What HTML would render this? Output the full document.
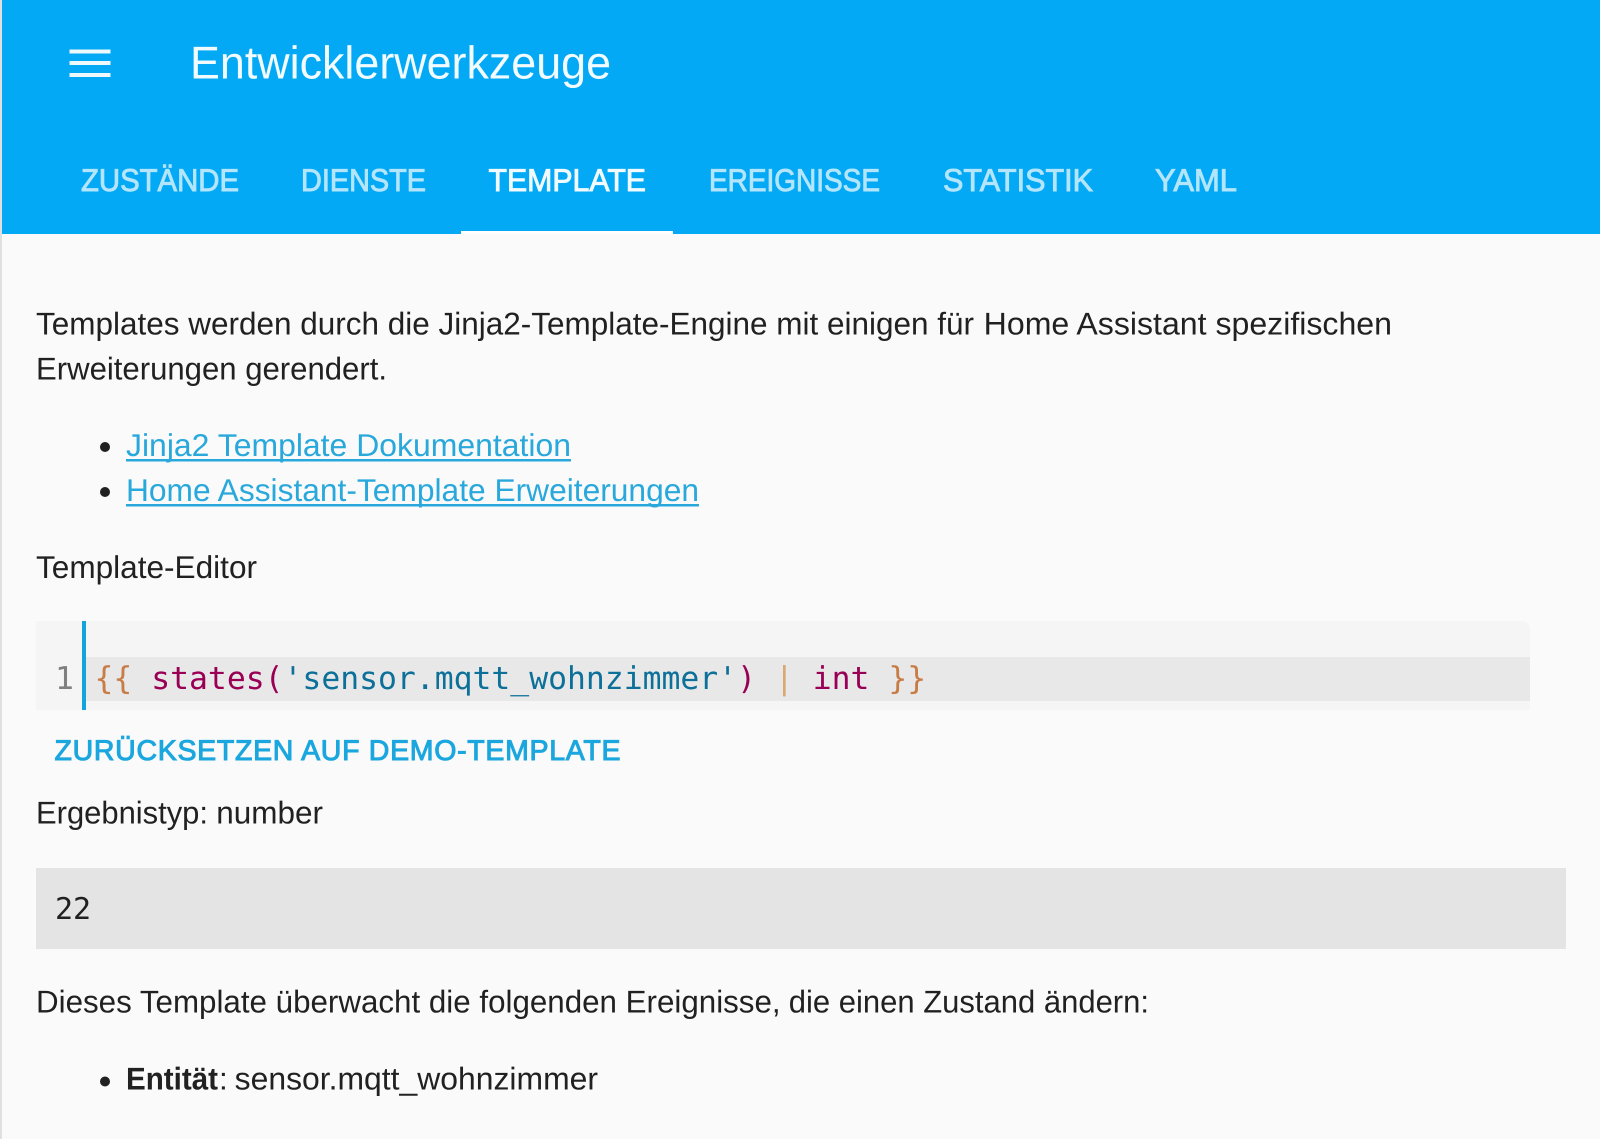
<!DOCTYPE html>
<html lang="de">
<head>
<meta charset="utf-8">
<title>Entwicklerwerkzeuge</title>
<style>
html,body{margin:0;padding:0;width:1600px;height:1139px;overflow:hidden;background:#fafafa}
svg{display:block;position:absolute;left:0;top:0}
text{font-family:"Liberation Sans",sans-serif;white-space:pre;text-rendering:geometricPrecision}
.b{font-size:31.5px;fill:#212121}
.tab{font-size:31.5px;fill:#b3e5fc;stroke:#b3e5fc;stroke-width:.9px}
.l{font-size:31.5px;fill:#29a8dc}
.m{font-family:"DejaVu Sans Mono",monospace}
</style>
</head>
<body>
<svg width="1600" height="1139" viewBox="0 0 1600 1139" xmlns="http://www.w3.org/2000/svg">
<rect width="1600" height="1139" fill="#fafafa"/>
<rect width="2" height="1139" fill="#e0e0e0"/>
<rect x="2" width="1598" height="234" fill="#03a9f4"/>
<rect x="69.5" y="49.5" width="41" height="4" fill="#eef9fe"/>
<rect x="69.5" y="61" width="41" height="4" fill="#eef9fe"/>
<rect x="69.5" y="73" width="41" height="4" fill="#eef9fe"/>
<text x="190" y="78.5" font-size="46" fill="#f2fbff" textLength="421" lengthAdjust="spacingAndGlyphs">Entwicklerwerkzeuge</text>
<text class="tab" x="81" y="191" textLength="158" lengthAdjust="spacingAndGlyphs">ZUSTÄNDE</text>
<text class="tab" x="301" y="191" textLength="125" lengthAdjust="spacingAndGlyphs">DIENSTE</text>
<text class="tab" x="488.5" y="191" textLength="157.5" lengthAdjust="spacingAndGlyphs" style="fill:#f0faff;stroke:#f0faff">TEMPLATE</text>
<text class="tab" x="709" y="191" textLength="171" lengthAdjust="spacingAndGlyphs">EREIGNISSE</text>
<text class="tab" x="943" y="191" textLength="150" lengthAdjust="spacingAndGlyphs">STATISTIK</text>
<text class="tab" x="1155" y="191" textLength="82" lengthAdjust="spacingAndGlyphs">YAML</text>
<rect x="461" y="231" width="212" height="3" fill="#fff"/>

<text class="b" x="36" y="334.5" textLength="938" lengthAdjust="spacingAndGlyphs">Templates werden durch die Jinja2-Template-Engine mit einigen für</text>
<text class="b" x="983.7" y="334.5" textLength="408.3" lengthAdjust="spacingAndGlyphs">Home Assistant spezifischen</text>
<text class="b" x="36" y="379.5" textLength="351" lengthAdjust="spacingAndGlyphs">Erweiterungen gerendert.</text>

<circle cx="105" cy="447" r="5" fill="#212121"/>
<text class="l" x="126" y="456" textLength="445" lengthAdjust="spacingAndGlyphs">Jinja2 Template Dokumentation</text>
<rect x="126" y="459" width="445" height="2.5" fill="#29a8dc"/>
<circle cx="105" cy="492" r="5" fill="#212121"/>
<text class="l" x="126" y="501" textLength="573" lengthAdjust="spacingAndGlyphs">Home Assistant-Template Erweiterungen</text>
<rect x="126" y="504" width="573" height="2.5" fill="#29a8dc"/>

<text class="b" x="36" y="578" textLength="221" lengthAdjust="spacingAndGlyphs">Template-Editor</text>

<path d="M36 621H1522a8 8 0 0 1 8 8V710H36Z" fill="#f5f5f5"/>
<rect x="86" y="657" width="1444" height="44" fill="#e8e8e8"/>
<rect x="82" y="621" width="4" height="89" fill="#12a5dd"/>
<text class="m" x="55" y="689" font-size="31.4" fill="#808080">1</text>
<text class="m" x="94.5" y="689" font-size="31.4" xml:space="preserve"><tspan fill="#c87c46">{{</tspan><tspan> </tspan><tspan fill="#905">states(</tspan><tspan fill="#0d7099">'sensor.mqtt_wohnzimmer'</tspan><tspan fill="#905">)</tspan><tspan> </tspan><tspan fill="#d8a870">|</tspan><tspan> </tspan><tspan fill="#905">int</tspan><tspan> </tspan><tspan fill="#c87c46">}}</tspan></text>

<text x="54.5" y="760" font-size="28.5" fill="#1ba6de" stroke="#1ba6de" stroke-width="1" textLength="566" lengthAdjust="spacing">ZURÜCKSETZEN AUF DEMO-TEMPLATE</text>
<text class="b" x="36" y="823.5" textLength="172" lengthAdjust="spacingAndGlyphs">Ergebnistyp:</text>
<text class="b" x="216.3" y="823.5" textLength="106.7" lengthAdjust="spacingAndGlyphs">number</text>

<rect x="36" y="868" width="1530" height="81" fill="#e4e4e4"/>
<text class="m" x="55" y="919" font-size="30" fill="#212121">22</text>

<text class="b" x="36" y="1012.5" textLength="744.6" lengthAdjust="spacingAndGlyphs">Dieses Template überwacht die folgenden Ereignisse,</text>
<text class="b" x="788.8" y="1012.5" textLength="360.2" lengthAdjust="spacingAndGlyphs">die einen Zustand ändern:</text>

<circle cx="105" cy="1081.5" r="5" fill="#212121"/>
<text class="b" x="126" y="1089.5" font-weight="bold" textLength="92" lengthAdjust="spacingAndGlyphs">Entität</text>
<text class="b" x="219" y="1089.5">:</text>
<text class="b" x="234.7" y="1089.5" textLength="363.3" lengthAdjust="spacingAndGlyphs">sensor.mqtt_wohnzimmer</text>
</svg>
</body>
</html>
